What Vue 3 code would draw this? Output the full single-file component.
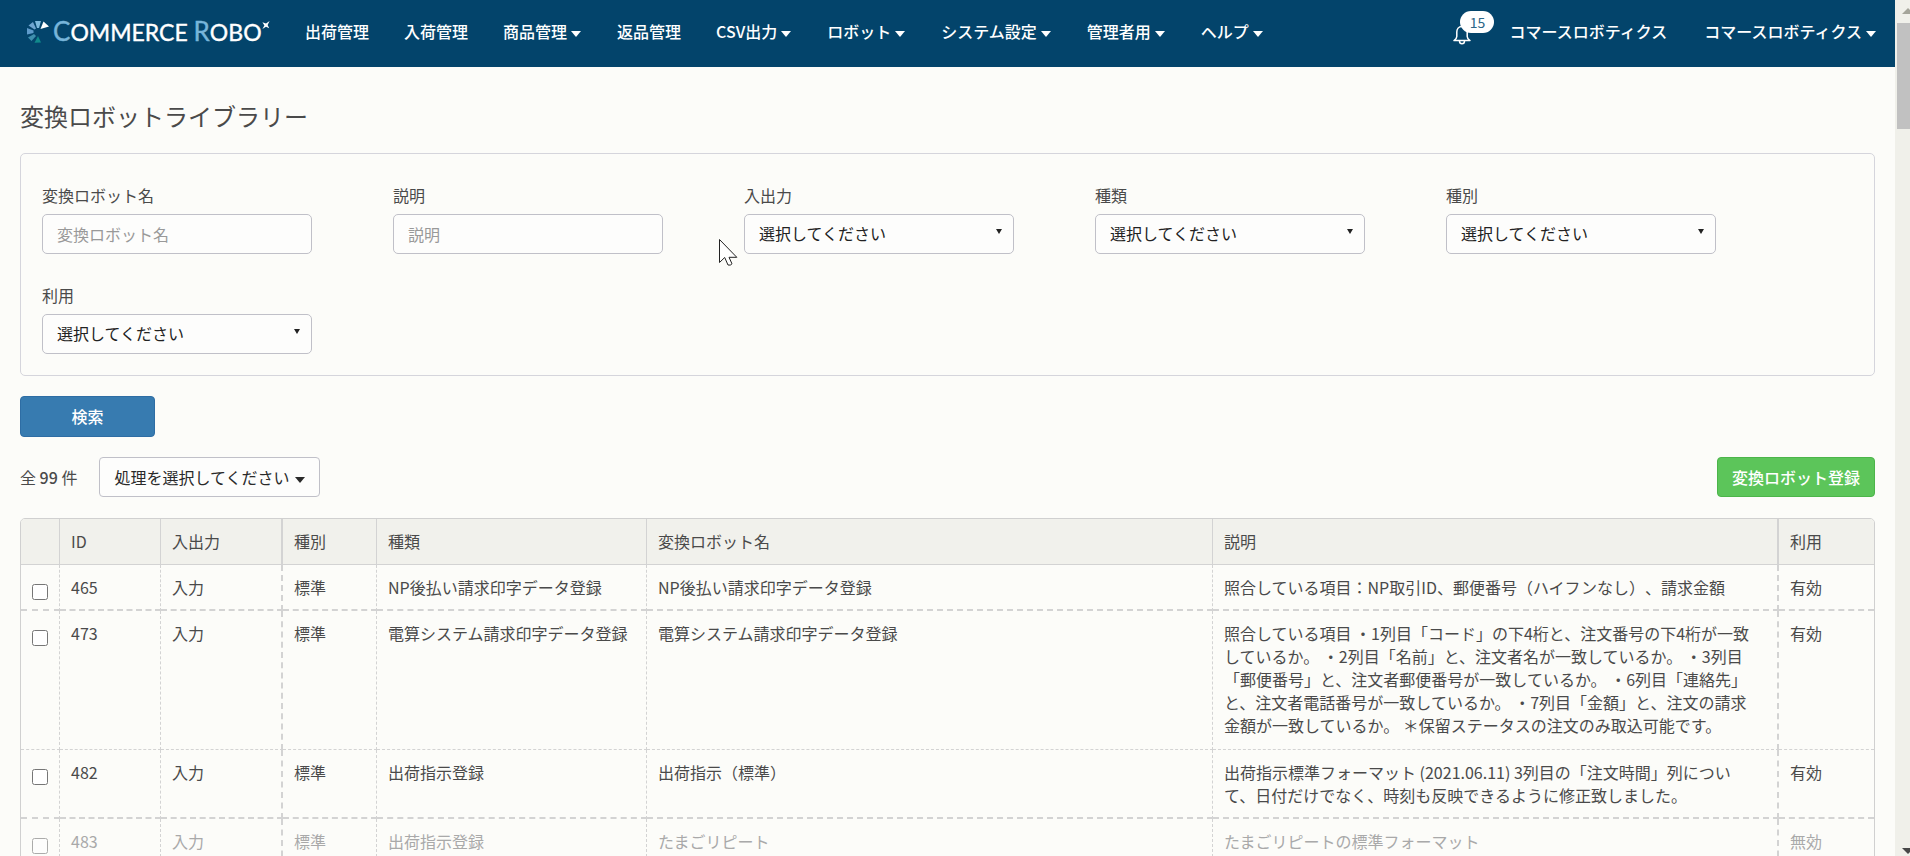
<script setup>
import { ref } from 'vue'

const nav = [
  { label: '出荷管理', menu: false },
  { label: '入荷管理', menu: false },
  { label: '商品管理', menu: true },
  { label: '返品管理', menu: false },
  { label: 'CSV出力', menu: true },
  { label: 'ロボット', menu: true },
  { label: 'システム設定', menu: true },
  { label: '管理者用', menu: true },
  { label: 'ヘルプ', menu: true }
]

const fields = [
  { id: 'name', label: '変換ロボット名', type: 'text' },
  { id: 'desc', label: '説明', type: 'text' },
  { id: 'io', label: '入出力', type: 'select' },
  { id: 'kind', label: '種類', type: 'select' },
  { id: 'class', label: '種別', type: 'select' },
  { id: 'use', label: '利用', type: 'select' }
]

const rows = ref([
  { id: 465, io: '入力', cls: '標準', kind: 'NP後払い請求印字データ登録', name: 'NP後払い請求印字データ登録', desc: '照合している項目：NP取引ID、郵便番号（ハイフンなし）、請求金額', use: '有効', picked: false },
  { id: 473, io: '入力', cls: '標準', kind: '電算システム請求印字データ登録', name: '電算システム請求印字データ登録', desc: '照合している項目 ・1列目「コード」の下4桁と、注文番号の下4桁が一致しているか。 ・2列目「名前」と、注文者名が一致しているか。 ・3列目「郵便番号」と、注文者郵便番号が一致しているか。 ・6列目「連絡先」と、注文者電話番号が一致しているか。 ・7列目「金額」と、注文の請求金額が一致しているか。 ＊保留ステータスの注文のみ取込可能です。', use: '有効', picked: false },
  { id: 482, io: '入力', cls: '標準', kind: '出荷指示登録', name: '出荷指示（標準）', desc: '出荷指示標準フォーマット (2021.06.11) 3列目の「注文時間」列について、日付だけでなく、時刻も反映できるように修正致しました。', use: '有効', picked: false },
  { id: 483, io: '入力', cls: '標準', kind: '出荷指示登録', name: 'たまごリピート', desc: 'たまごリピートの標準フォーマット', use: '無効', picked: false }
])
</script>

<template>
  <div class="shell">
    <div class="page">
      <header class="topbar">
        <a class="brand" href="#" aria-label="Commerce Robo">
          <svg class="brand-mark" width="24" height="24" viewBox="0 0 24 24" aria-hidden="true">
            <path fill="#fff" d="M17.5 1.5 23 6.5 14.5 9Z" />
            <path fill="#7db9dc" d="M9 1h6l-2 7h-2Z" />
            <path fill="#6fa5d0" d="M2.5 5.5 7 2l3 6.500-1.500 1Z" />
            <path fill="#5f9bcb" d="M1 8l6.500 2.500V13L1 14.500Z" />
            <path fill="#3f8fae" d="M2 17.500 8 14l2 2-4.500 5Z" />
            <path fill="#118a8c" d="M12 16l3 6.500-6.500.3Z" />
          </svg>
          <span class="brand-text"><span class="initial">C</span>OMMERCE <span class="initial">R</span>OBO</span>
          <svg class="spark" width="8" height="8" viewBox="0 0 10 10" aria-hidden="true">
            <path fill="#fff" d="M.5 1.500 5 3l4.500-3L7 5l2 4-4-1.800L.5 10 3 5.500Z" />
          </svg>
        </a>
        <nav class="menu">
          <a v-for="item in nav" :key="item.label" href="#">{{ item.label }}<i v-if="item.menu" class="caret"></i></a>
        </nav>
        <div class="account">
          <button class="bell" type="button" aria-label="通知">
            <svg width="18" height="20" viewBox="0 0 18 20" fill="none" stroke="#fff" stroke-width="1.500" stroke-linejoin="round" aria-hidden="true">
              <path d="M9 1.500C5.500 1.500 3.800 4 3.800 7v4.500c0 1.500-1 2.800-2.800 4h16c-1.800-1.200-2.800-2.500-2.800-4V7c0-3-1.700-5.500-5.200-5.500Z" />
              <path d="M6.500 16a2.500 2.800 0 0 0 5 0" />
            </svg>
            <span class="badge">15</span>
          </button>
          <a href="#">コマースロボティクス</a>
          <a class="user" href="#">コマースロボティクス<i class="caret"></i></a>
        </div>
      </header>

      <main class="content">
        <h1>変換ロボットライブラリー</h1>

        <form @submit.prevent>
          <div class="panel">
            <div v-for="f in fields" :key="f.id" class="field">
              <label :for="f.id">{{ f.label }}</label>
              <input v-if="f.type === 'text'" :id="f.id" class="control" type="text" :placeholder="f.label" />
              <div v-else class="select-box">
                <select :id="f.id" class="control">
                  <option>選択してください</option>
                </select>
              </div>
            </div>
          </div>
          <button class="btn search" type="submit">検索</button>
        </form>

        <div class="toolbar">
          <span>全 <b>99</b> 件</span>
          <button class="btn plain" type="button">処理を選択してください<i class="caret"></i></button>
          <button class="btn create" type="button">変換ロボット登録</button>
        </div>

        <div class="table-frame">
          <table>
            <colgroup>
              <col class="c-check" /><col class="c-id" /><col class="c-io" /><col class="c-class" /><col class="c-kind" /><col /><col /><col class="c-use" />
            </colgroup>
            <thead>
              <tr>
                <th></th><th>ID</th><th class="heavy">入出力</th><th>種別</th><th>種類</th><th>変換ロボット名</th><th class="heavy">説明</th><th>利用</th>
              </tr>
            </thead>
            <tbody>
              <tr v-for="r in rows" :key="r.id" :class="{ disabled: r.use === '無効' }">
                <td class="check"><input v-model="r.picked" type="checkbox" :aria-label="`${r.id}を選択`" /></td>
                <td>{{ r.id }}</td>
                <td class="heavy">{{ r.io }}</td>
                <td>{{ r.cls }}</td>
                <td>{{ r.kind }}</td>
                <td>{{ r.name }}</td>
                <td class="heavy desc">{{ r.desc }}</td>
                <td>{{ r.use }}</td>
              </tr>
            </tbody>
          </table>
        </div>
      </main>
    </div>

    <div class="scrollbar" aria-hidden="true">
      <svg width="13" height="23" viewBox="0 0 13 23"><path fill="#a5a59a" d="M5 14l6-6 6 6Z" /></svg>
      <div class="thumb"></div>
      <svg class="down" width="13" height="10" viewBox="0 0 13 10"><path fill="#484848" d="M5 2h12l-6 6Z" /></svg>
    </div>

    <svg class="pointer" width="20" height="28" viewBox="0 0 20 28" aria-hidden="true">
      <path fill="#fff" stroke="#222" d="M.5.5v23l5.200-5 3.300 7.500q2.500.8 4-1.200L10 18.300h7.800Z" />
    </svg>
  </div>
</template>

<style>
body {
  margin: 0;
  background: #fcfcf9;
}
</style>

<style scoped>
.shell {
  position: relative;
  display: flex;
  height: 100vh;
  overflow: hidden;
  color: #4a4a4a;
  font: 16px/23px "Noto Sans CJK JP", sans-serif;
  text-spacing-trim: space-all;
}
.shell * {
  box-sizing: border-box;
}
.page {
  flex: 1;
  min-width: 0;
  overflow: hidden;
}
a {
  color: inherit;
  text-decoration: none;
}
button,
input,
select {
  font: inherit;
}

.topbar {
  display: flex;
  align-items: center;
  height: 67px;
  padding: 0 18px 4px 26px;
  background: #03446b;
  color: #fff;
  font-weight: 500;
  white-space: nowrap;
}
.brand {
  display: flex;
  align-items: center;
  width: 279px;
}
.brand-mark {
  flex: none;
  margin-right: 3px;
}
.brand-text {
  font: 400 23px/32px Lato, sans-serif;
  -webkit-text-stroke: 0.4px currentColor;
}
.initial {
  color: #77b5da;
  font-size: 26px;
}
.spark {
  align-self: flex-start;
  margin-top: 6px;
}
.menu {
  display: flex;
  gap: 35px;
}
.caret {
  display: inline-block;
  margin-left: 4px;
  border: 5px solid transparent;
  border-top: 6px solid currentColor;
  border-bottom: 0;
  vertical-align: 1px;
}
.menu .caret,
.user .caret {
  margin-right: 1px;
}
.account {
  display: flex;
  align-items: center;
  gap: 37px;
  margin-left: auto;
}
.bell {
  position: relative;
  width: 19px;
  height: 24px;
  padding: 0;
  border: 0;
  background: none;
}
.bell svg {
  display: block;
  margin-top: 5px;
}
.badge {
  position: absolute;
  left: 7px;
  top: -9px;
  width: 34px;
  border-radius: 11px;
  background: #fff;
  color: #2c6688;
  font-size: 14px;
  font-weight: 400;
  line-height: 22px;
  text-align: center;
}

.content {
  padding: 32px 20px 0;
}
h1 {
  margin: 0 0 20px;
  font-size: 24px;
  font-weight: 400;
  line-height: 34px;
}
.panel {
  display: grid;
  grid-template-columns: repeat(auto-fill, 270px);
  gap: 29px 81px;
  padding: 29px 21px 21px;
  border: 1px solid #d5d5dc;
  border-radius: 5px;
}
.field label {
  display: block;
  margin-bottom: 7px;
  line-height: 24px;
}
.control {
  display: block;
  width: 100%;
  height: 40px;
  padding: 0 14px 1px;
  border: 1px solid #c0c0c8;
  border-radius: 5px;
  background: #fdfdfc;
  color: #222;
  appearance: none;
}
.control::placeholder {
  color: #999;
  opacity: 1;
}
.select-box {
  position: relative;
}
.select-box::after {
  content: "";
  position: absolute;
  right: 12px;
  top: 15px;
  border: 3px solid transparent;
  border-top: 5px solid #222;
  border-bottom: 0;
  pointer-events: none;
}

.btn {
  height: 40px;
  padding: 0 14px;
  border: 1px solid transparent;
  border-radius: 4px;
  white-space: nowrap;
}
.search {
  display: block;
  width: 135px;
  height: 41px;
  margin: 20px 0;
  background: #377bb0;
  border-color: #2e6da4;
  color: #fff;
  font-weight: 500;
}
.toolbar {
  display: flex;
  align-items: center;
  gap: 22px;
  margin-bottom: 21px;
}
.toolbar b {
  font-weight: 500;
}
.plain {
  background: #fdfdfc;
  border-color: #c0c0c8;
  color: #2a2a2a;
}
.plain .caret {
  margin-left: 6px;
}
.create {
  margin-left: auto;
  background: #5cc55a;
  border-color: #4cb54a;
  color: #fff;
  font-weight: 500;
}

.table-frame {
  border: 1px solid #d0d0d0;
  border-radius: 5px;
  overflow: hidden;
}
table {
  width: 100%;
  table-layout: fixed;
  border-collapse: separate;
  border-spacing: 0;
}
.c-check { width: 39px; }
.c-id { width: 101px; }
.c-io { width: 122px; }
.c-class { width: 94px; }
.c-kind { width: 270px; }
.c-use { width: 95px; }
th,
td {
  padding: 11px 11px 12px;
  border-right: 1px dashed #d3d3d3;
  border-bottom: 1px dashed #d3d3d3;
  text-align: left;
  vertical-align: top;
  font-weight: 400;
}
th {
  padding-bottom: 11px;
  border-style: solid;
  border-width: 0 1px 1px 0;
  border-color: #d3d3d3;
  background: #f1f1ec;
}
td:nth-child(5) {
  white-space: nowrap;
}
.heavy {
  border-right-width: 2px;
}
.desc {
  padding-right: 18px;
}
tbody tr:nth-child(odd) td {
  padding-bottom: 10px;
  border-bottom-width: 2px;
}
tbody tr:nth-child(odd) .check {
  padding-bottom: 0;
}
th:last-child,
td:last-child {
  border-right: 0;
}
.check input {
  display: block;
  width: 16px;
  height: 16px;
  margin: 8px 0 0;
}
.disabled td {
  color: #a9a9a9;
}
.disabled input {
  opacity: 0.6;
}

.scrollbar {
  display: flex;
  flex: none;
  flex-direction: column;
  width: 15px;
  padding-left: 2px;
  background: #f0f0ea;
}
.thumb {
  height: 106px;
  background: #c1c1c1;
}
.down {
  margin-top: auto;
}
.pointer {
  position: absolute;
  left: 719px;
  top: 239px;
}
</style>
